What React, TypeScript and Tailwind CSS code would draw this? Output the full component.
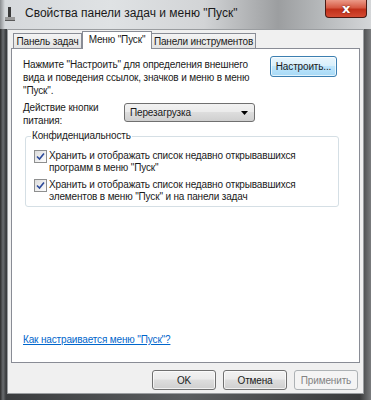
import React from "react";

function CheckBox() {
  return (
    <div className="w-[13px] h-[13px] shrink-0 border border-[#8e8f8f] bg-[linear-gradient(135deg,#dcdcdc,#ffffff)] flex items-center justify-center">
      <svg width="9" height="9" viewBox="0 0 9 9">
        <path d="M1 4.5 L3.5 7 L8 1.5" fill="none" stroke="#2c4a9a" strokeWidth="1.6" />
      </svg>
    </div>
  );
}

const btn =
  "w-[64px] h-[20px] rounded-[3px] border border-[#707070] bg-[linear-gradient(180deg,#f2f2f2_0%,#ebebeb_45%,#dddddd_50%,#cfcfcf_100%)] shadow-[inset_0_0_0_1px_#ffffffb0]";

export default function App() {
  const font = { fontFamily: '"Liberation Sans", Arial, sans-serif' };

  return (
    <div
      className="w-[371px] h-[400px] relative overflow-hidden flex flex-col bg-[linear-gradient(90deg,#2a2a2a_0px,#6a6d70_3px,#3a3c3e_6px,#5b5e60_50%,#3a3b3c_97%,#7a7c7e_100%)] text-[10px] tracking-[-0.15px] text-[#1a1a1a]"
      style={font}
    >
      {/* TITLE BAR */}
      <div className="h-[29px] shrink-0 flex items-center pl-[5px] tracking-normal bg-[linear-gradient(90deg,#8a8d90_0px,#d6d9dc_5px,#dfe2e4_30%,#d2d4d6_55%,#9c9ea0_75%,#b9bcbe_88%,#d4d6d8_100%)]">
        <svg width="10" height="14" viewBox="0 0 10 14" className="mr-[10px] mb-[2px]">
          <rect x="3" y="0" width="3" height="11" fill="#3a3a3a" />
          <rect x="0" y="10" width="10" height="3" fill="#9a9a9a" />
          <rect x="0" y="13" width="10" height="1" fill="#5a5a5a" />
        </svg>
        <span className="text-[12px] text-[#1a1a1a] mb-[3px]">Свойства панели задач и меню "Пуск"</span>
      </div>

      {/* CLOSE */}
      <div className="absolute left-[325px] top-0 w-[42px] h-[18px] rounded-b-[4px] border border-t-0 border-[#4a1a14] bg-[linear-gradient(180deg,#eb9a88_0%,#d65a44_45%,#c0301a_55%,#d44a32_100%)] flex items-center justify-center">
        <span className="text-white font-bold text-[13px] leading-none [text-shadow:0_0_2px_#5a1a10]" style={{ fontFamily: '"DejaVu Sans", sans-serif' }}>
          x
        </span>
      </div>

      {/* CLIENT */}
      <div className="mx-[7px] flex-1 mb-[6px] bg-[#f0f0f0] border border-[#9a9da0] flex flex-col px-[3px]">
        {/* TABS */}
        <div className="flex items-end h-[18px] pl-[2px]">
          <div className="h-[15px] w-[69px] border border-b-0 border-[#898c95] bg-[linear-gradient(180deg,#f4f4f4,#e3e3e3)] flex items-center justify-center">
            Панель задач
          </div>
          <div className="h-[18px] w-[70px] border border-b-0 border-[#898c95] bg-white -mb-[1px] relative z-10 flex items-center justify-center pb-[2px]">
            Меню "Пуск"
          </div>
          <div className="h-[15px] w-[104px] border border-b-0 border-l-0 border-[#898c95] bg-[linear-gradient(180deg,#f4f4f4,#e3e3e3)] flex items-center justify-center">
            Панели инструментов
          </div>
        </div>

        {/* PANEL */}
        <div className="h-[315px] bg-white border border-[#898c95] flex flex-col pl-[11px] pr-[10px] pt-[7px]">
          <div className="flex items-start">
            <p className="w-[236px] leading-[13px] mt-[2px]">
              Нажмите "Настроить" для определения внешнего
              <br />
              вида и поведения ссылок, значков и меню в меню
              <br />
              "Пуск".
            </p>
            <button className="ml-auto mr-[12px] w-[67px] h-[21px] rounded-[3px] border border-[#3c7fb1] bg-[linear-gradient(180deg,#eaf6fd_0%,#d9f0fc_45%,#bee6fd_50%,#a7d9f5_100%)] shadow-[inset_0_0_0_1px_#ffffffaa]">
              Настроить...
            </button>
          </div>

          <div className="flex items-start mt-[4px]">
            <p className="w-[101px] leading-[13px]">
              Действие кнопки
              <br />
              питания:
            </p>
            <div className="w-[131px] h-[19px] mt-[2px] rounded-[3px] border border-[#707070] bg-[linear-gradient(180deg,#f2f2f2_0%,#ebebeb_45%,#dddddd_50%,#cfcfcf_100%)] flex items-center pl-[5px] pr-[6px]">
              <span>Перезагрузка</span>
              <svg width="7" height="4" viewBox="0 0 7 4" className="ml-auto">
                <path d="M0 0 H7 L3.5 4 Z" fill="#000" />
              </svg>
            </div>
          </div>

          {/* GROUP BOX */}
          <div className="ml-[2px] mr-[10px] mt-[9px] h-[71px] relative border border-[#d5dfe5] rounded-[3px] pl-[8px] pt-[13px]">
            <span className="absolute left-[5px] -top-[7px] bg-white px-[1px] leading-[12px]">Конфиденциальность</span>
            <div className="flex items-start gap-[2px] leading-[12px]">
              <CheckBox />
              <span>
                Хранить и отображать список недавно открывавшихся
                <br />
                программ в меню "Пуск"
              </span>
            </div>
            <div className="flex items-start gap-[2px] leading-[12px] mt-[5px]">
              <CheckBox />
              <span>
                Хранить и отображать список недавно открывавшихся
                <br />
                элементов в меню "Пуск" и на панели задач
              </span>
            </div>
          </div>

          <a className="mt-auto mb-[15px] text-[#0066cc] underline">Как настраивается меню "Пуск"?</a>
        </div>

        {/* BUTTONS */}
        <div className="flex justify-end gap-[7px] mt-[7px] pr-[2px]">
          <button className={btn}>OK</button>
          <button className={btn}>Отмена</button>
          <button className="w-[64px] h-[20px] rounded-[3px] border border-[#adb2b5] bg-[#f4f4f4] text-[#838383]">
            Применить
          </button>
        </div>
      </div>
    </div>
  );
}
